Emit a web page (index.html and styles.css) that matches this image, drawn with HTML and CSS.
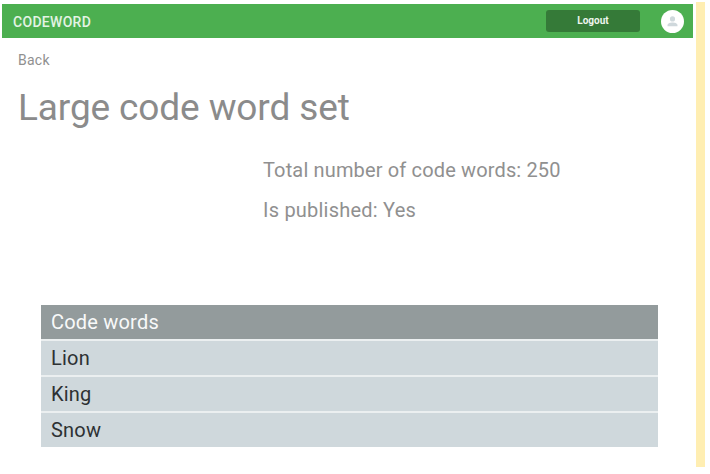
FILE: index.html
```html
<!DOCTYPE html>
<html lang="en">
<head>
<meta charset="utf-8">
<title>Codeword</title>
<link rel="stylesheet" href="styles.css">
</head>
<body>
<div class="page">
  <div class="main">
    <header class="bar">
      <span class="brand">CODEWORD</span>
      <button class="logout">Logout</button>
      <span class="avatar">
        <svg viewBox="0 0 24 24" width="23" height="23"><circle cx="12" cy="9.3" r="2.7"/><path d="M6.8 17v-1.3c0-1.9 3.2-2.7 5.2-2.7s5.2.8 5.2 2.7V17z"/></svg>
      </span>
    </header>
    <a class="back">Back</a>
    <h1 class="title">Large code word set</h1>
    <div class="info">
      <p class="total">Total number of code words: 250</p>
      <p class="published">Is published: Yes</p>
    </div>
    <div class="table">
      <div class="row head">Code words</div>
      <div class="row">Lion</div>
      <div class="row">King</div>
      <div class="row">Snow</div>
    </div>
  </div>
  <div class="strip"></div>
</div>
</body>
</html>
```
FILE: styles.css
```css
* { box-sizing: border-box; }
body {
  margin: 0;
  background: #fff;
  font-family: Roboto, "Liberation Sans", sans-serif;
  color: #8b8b8b;
}
.page {
  display: flex;
  gap: 3px;
  width: 710px;
  height: 474px;
  padding: 2px 5px 7px 2px;
  overflow: hidden;
}
.main { width: 691px; padding-top: 2px; flex: none; }
.strip { width: 9px; background: #ffeeb2; flex: none; }
.bar {
  display: flex;
  align-items: center;
  height: 34px;
  padding: 0 9px 0 11px;
  background: #4caf50;
}
.brand { padding-top: 1px; color: #e3f3e4; font-size: 14px; letter-spacing: 0.3px; font-weight: 500; flex: 1; }
.logout {
  width: 94px;
  height: 22px;
  margin-right: 21px;
  padding: 0;
  border: 0;
  border-radius: 3px;
  background: #357a38;
  color: #eef5ee;
  font: 700 10px/22px Roboto, sans-serif;
}
.avatar { width: 23px; height: 23px; border-radius: 50%; background: #fff; flex: none; }
.avatar svg { display: block; fill: #cfd8dc; }
.back { display: block; width: max-content; margin: 12px 0 0 16px; font-size: 14px; letter-spacing: 0.25px; line-height: 20px; color: #909090; }
.title { margin: 14px 0 0 16px; font-size: 37px; letter-spacing: -0.12px; line-height: 48px; font-weight: 400; width: max-content; }
.info { margin: 18px 0 0 261px; font-size: 20px; letter-spacing: 0.15px; line-height: 40px; color: #909090; }
.info p { margin: 0; width: max-content; }
.published { letter-spacing: 0.22px; }
.table {
  display: grid;
  grid-auto-rows: 34px;
  gap: 2px;
  width: 617px;
  margin: 75px 0 0 39px;
  background: #ebeff0;
}
.row { padding-left: 10px; font-size: 20px; letter-spacing: 0.2px; line-height: 35px; background: #cfd8dc; color: #2d3133; }
.head { background: #939b9c; color: #f8f9f9; }
```
